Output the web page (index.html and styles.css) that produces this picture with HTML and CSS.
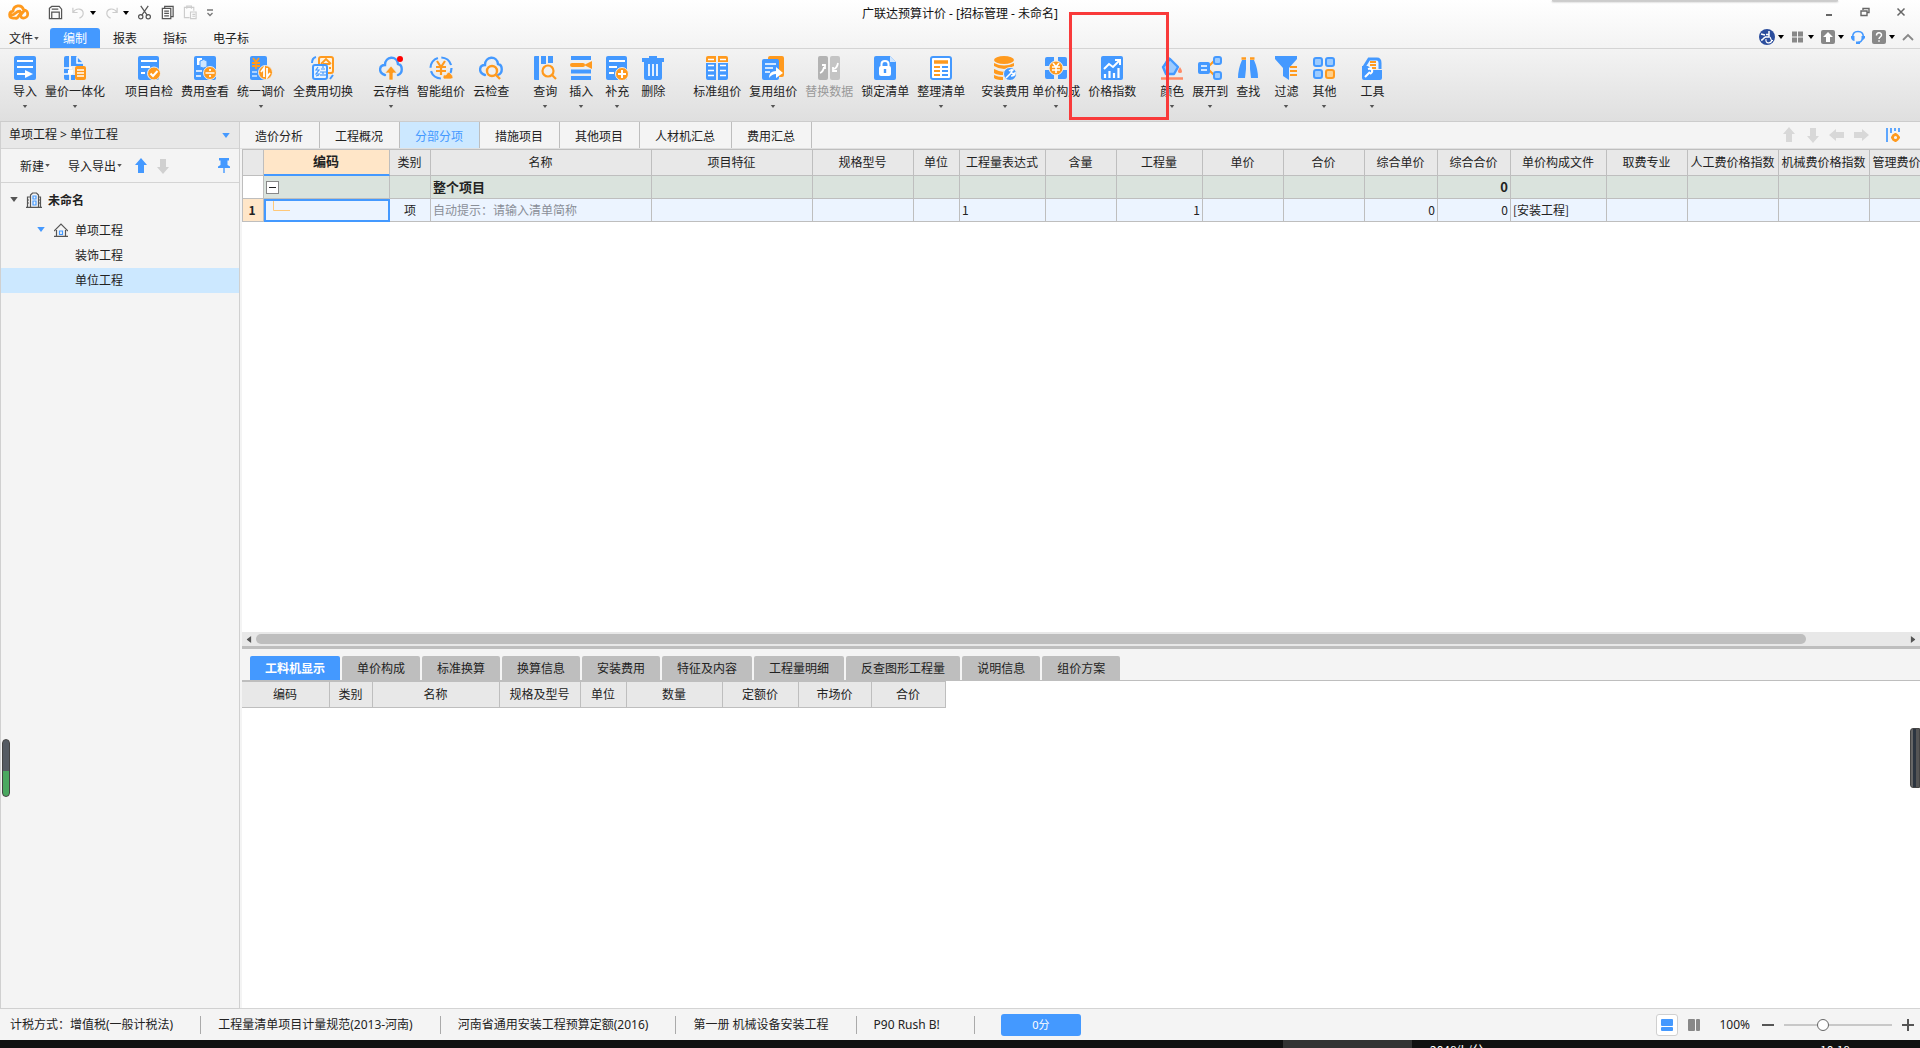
FILE: index.html
```html
<!DOCTYPE html>
<html lang="zh-CN">
<head>
<meta charset="utf-8">
<title>广联达预算计价 - [招标管理 - 未命名]</title>
<link rel="stylesheet" href="styles.css">
</head>
<body>
<svg class="defs" aria-hidden="true">
  <symbol id="caret" viewBox="0 0 6 4"><path d="M0 0h6L3 4z" fill="currentColor"/></symbol>
  <symbol id="up" viewBox="0 0 14 16"><path d="M7 0l6 7H10v8H4V7H1z" fill="currentColor"/></symbol>
  <symbol id="cloud" viewBox="0 0 24 24"><path d="M6 19C-1 17 0 9 6 9c0-9 12-10 13-1 5 1 5 9 0 11" fill="none" stroke="#49f" stroke-width="2.4" stroke-linecap="round"/></symbol>
</svg>

<header class="top">
  <div class="titlebar">
    <div class="quick">
      <svg class="logo" viewBox="0 0 24 18"><path d="M10 15H5.500c-5 0-5-7 0-7.500C6 1 15-.5 17 6c6 0 6 9 0 9-3.500 0-4-3-2-5l2-2M4 11.500c4 .5 4-4 9-4M9 15.500c3-1 3-5 6-6.500" fill="none" stroke="#ff9a1e" stroke-width="3" stroke-linecap="round" stroke-linejoin="round"/></svg>
      <button class="qbtn" aria-label="保存"><svg viewBox="0 0 16 16"><path d="M4 1.500h8l2.500 3v10h-13v-11zM4 14V7.500h8V14M4 4.500h7" fill="none" stroke="#555" stroke-width="1.300"/></svg></button>
      <button class="qbtn off" aria-label="撤销"><svg viewBox="0 0 16 16"><path d="M2 3v5h5M2 8c4-6 11-4 11 1 0 3-2 4-4 5" fill="none" stroke="#ccc" stroke-width="1.300"/></svg><svg class="caret blk"><use href="#caret"/></svg></button>
      <button class="qbtn off" aria-label="恢复"><svg viewBox="0 0 16 16"><path d="M14 3v5H9M14 8C10 2 3 4 3 9c0 3 2 4 4 5" fill="none" stroke="#ccc" stroke-width="1.300"/></svg><svg class="caret blk"><use href="#caret"/></svg></button>
      <button class="qbtn" aria-label="剪切"><svg viewBox="0 0 16 16"><path d="M4 1l7 10M12 1L5 11" fill="none" stroke="#555" stroke-width="1.300"/><circle cx="4" cy="12.500" r="2.300" fill="none" stroke="#555" stroke-width="1.300"/><circle cx="12" cy="12.500" r="2.300" fill="none" stroke="#555" stroke-width="1.300"/></svg></button>
      <button class="qbtn" aria-label="复制"><svg viewBox="0 0 16 16"><path d="M5 3V1.500h9v11h-2M2.500 3.500h9v11h-9zM4.500 6.500h5M4.500 9h5M4.500 11.500h5" fill="none" stroke="#555" stroke-width="1.300"/></svg></button>
      <button class="qbtn off" aria-label="粘贴"><svg viewBox="0 0 16 16"><path d="M7 13.500H1.500v-11h10V6M4 4V1h5v3M8 7.500h6v7H8zM10 10h3M10 12h3" fill="none" stroke="#ccc" stroke-width="1.200"/></svg></button>
      <button class="more" aria-label="自定义"><svg viewBox="0 0 8 8"><path d="M1 1h6M1.500 4L4 6.500 6.500 4" fill="none" stroke="#777" stroke-width="1.300"/></svg></button>
    </div>
    <h1>广联达预算计价 - [招标管理 - 未命名]</h1>
    <div class="winctl">
      <button aria-label="最小化"><svg viewBox="0 0 10 10"><path d="M2 8h6" stroke="#666" stroke-width="2"/></svg></button>
      <button aria-label="还原"><svg viewBox="0 0 10 10"><path d="M3 3V1.500h6v4H7M1 4h6v4.500H1z" fill="none" stroke="#666" stroke-width="1.400"/></svg></button>
      <button aria-label="关闭"><svg viewBox="0 0 10 10"><path d="M1.500 1.500l7 7M8.500 1.500l-7 7" stroke="#666" stroke-width="1.500"/></svg></button>
    </div>
  </div>
  <nav class="menu">
    <button class="file">文件<svg class="caret small"><use href="#caret"/></svg></button>
    <button class="on">编制</button><button>报表</button><button>指标</button><button>电子标</button>
    <div class="tools">
      <button aria-label="账户"><svg class="i16" viewBox="0 0 16 16"><circle cx="8" cy="8" r="8" fill="#2b4d9d"/><path d="M10 2v6H6M2 5l4 1M6 8l-3 3H2M7 5.500h3" fill="none" stroke="#fff" stroke-width="1.500"/><path d="M7 10c-1 5 5 5 6 1M11 8l1.500 3.500H14" fill="none" stroke="#fff" stroke-width="1.100"/></svg><svg class="caret blk"><use href="#caret"/></svg></button>
      <button aria-label="窗口"><svg class="i14" viewBox="0 0 14 14"><path d="M1 1.500h5v5H1zM7 1.500h5v5H7zM1 7.500h5v5H1zM7 7.500h5v5H7z" fill="#888"/></svg><svg class="caret blk"><use href="#caret"/></svg></button>
      <button aria-label="升级"><svg class="i14" viewBox="0 0 14 14"><rect width="14" height="14" rx="2" fill="#888"/><path d="M7 2l5 5H9v5H5V7H2z" fill="#fff"/></svg><svg class="caret blk"><use href="#caret"/></svg></button>
      <button aria-label="客服"><svg class="i14" viewBox="0 0 14 14"><path d="M2 8C1 4 3 1.500 7 1.500S13 4 12 8c-1 3-2 4.500-5 4.500" fill="none" stroke="#49f" stroke-width="1.600"/><path d="M0 6h3.500v5Q1 11 0 8zM14 6h-3.500v4Q13 10 14 8zM5 11.500h4V14H5z" fill="#49f"/></svg></button>
      <button aria-label="帮助"><svg class="i14" viewBox="0 0 14 14"><rect width="14" height="14" rx="2" fill="#888"/><path d="M4.500 5.500C4.500 2 9.500 2 9.500 5c0 2-2.500 2-2.500 4M7 10.300v1.500" fill="none" stroke="#fff" stroke-width="1.500"/></svg><svg class="caret blk"><use href="#caret"/></svg></button>
      <button aria-label="收起功能区"><svg class="i12" viewBox="0 0 12 12"><path d="M1 9l5-5 5 5" fill="none" stroke="#888" stroke-width="1.800"/></svg></button>
    </div>
  </nav>
</header>

<section class="ribbon" aria-label="功能区">
  <div class="grp s20">
    <button><svg class="ic" viewBox="0 0 24 24"><rect x="1" width="22" height="24" rx="2" fill="#49f"/><path d="M4 5h16M4 11h16M4 18h9" stroke="#fff" stroke-width="1.800"/><path d="M12 14l8 4-8 4z" fill="#fff"/></svg>导入<svg class="caret"><use href="#caret"/></svg></button>
    <button><svg class="ic" viewBox="0 0 24 24"><path d="M1 2q0-2 2-2h3v24H3q-2 0-2-2zM8 0h5l7 7v3H8zM8 19h4v5H8z" fill="#49f"/><path d="M1 12h8M1 18h8M14 1v6h6" stroke="#fff" stroke-width="1.500" fill="none"/><rect x="5" y="14" width="5" height="4" fill="#fff"/><rect x="12" y="10" width="11" height="14" rx="2" fill="#ff9a1e"/><path d="M14 14h7M14 17h7M14 20h7" stroke="#fff" stroke-width="1.300"/></svg>量价一体化<svg class="caret"><use href="#caret"/></svg></button>
  </div>
  <div class="grp s20">
    <button><svg class="ic" viewBox="0 0 24 24"><rect x="1" width="21" height="24" rx="2" fill="#49f"/><path d="M4 5h16M4 11h9M4 17h4" stroke="#fff" stroke-width="1.800"/><circle cx="17" cy="17.500" r="6.500" fill="#ff9a1e" stroke="#eee"/><path d="M13.500 17.500l2.500 2.500 4.500-5" fill="none" stroke="#fff" stroke-width="2"/></svg>项目自检</button>
    <button><svg class="ic" viewBox="0 0 24 24"><rect x="1" width="22" height="24" rx="2" fill="#49f"/><rect x="4" y="2" width="5" height="7" fill="#fff"/><path d="M7 5q4-3 7 0v6q-4 2-7 0z" fill="#cfe6ff" stroke="#49f"/><path d="M3 15h6M3 20h5" stroke="#fff" stroke-width="1.700"/><circle cx="17" cy="17" r="6.500" fill="#ff9a1e" stroke="#eee"/><path d="M12.500 17h9M17 13v2M17 19v2" stroke="#fff" stroke-width="1.700"/></svg>费用查看</button>
    <button><svg class="ic" viewBox="0 0 24 24"><rect x="1" width="17" height="24" rx="2" fill="#49f"/><path d="M4 2l3 4 3-4M3 7h8M3 10h8M7 6v7" stroke="#ff9a1e" stroke-width="1.800" fill="none"/><path d="M3 16h5M3 20h5" stroke="#cfe6ff" stroke-width="1.600"/><circle cx="16.500" cy="16.500" r="7" fill="#ff9a1e" stroke="#eee"/><path d="M15 21v-9l-3 4M18 12v9l3-4" fill="none" stroke="#fff" stroke-width="1.800"/></svg>统一调价<svg class="caret"><use href="#caret"/></svg></button>
    <button><svg class="ic" viewBox="0 0 24 24"><rect x="8" y="1" width="14" height="16" rx="2" fill="#fff3df" stroke="#ff9a1e" stroke-width="2"/><path d="M10 8l5-5 5 5M12 8h7M18 12h2" stroke="#ff9a1e" stroke-width="1.800" fill="none"/><rect x="2" y="9" width="14" height="14" rx="2" fill="#eaf4ff" stroke="#49f" stroke-width="2"/><path d="M7 11l-2 3h3l-3 4h4M5 20l3-1M10 13h4M9 16h6M12 16v4M10 18v2M14 18v2M12 10v2" stroke="#49f" stroke-width="1.200" fill="none"/><path d="M1 7q0-5 4-6M22 19l-3 4" stroke="#49f" stroke-width="2" fill="none"/></svg>全费用切换</button>
  </div>
  <div class="grp s24">
    <button><svg class="ic" viewBox="0 0 24 24"><use href="#cloud"/><path d="M12 10l6 7h-4v7h-4v-7H6z" fill="#ff9a1e" stroke="#eee" stroke-width=".7"/><circle cx="21" cy="3" r="3" fill="red"/></svg>云存档<svg class="caret"><use href="#caret"/></svg></button>
    <button><svg class="ic" viewBox="0 0 24 24"><circle cx="12" cy="12" r="10.500" fill="none" stroke="#49f" stroke-width="2.200" stroke-dasharray="13 3.500"/><path d="M8 5l4 6 4-6M7 11h10M7 15h10M12 10v9" stroke="#ff9a1e" stroke-width="2.200" fill="none"/><path d="M14 22q0-4 3-3 2-5 5-1 4 4 0 5h-7z" fill="#ff9a1e" stroke="#eee" stroke-width=".7"/></svg>智能组价</button>
    <button><svg class="ic" viewBox="0 0 24 24"><use href="#cloud"/><circle cx="13" cy="15" r="5" fill="#f0f0f0" stroke="#ff9a1e" stroke-width="2.400"/><path d="M17 19l4 4" stroke="#ff9a1e" stroke-width="2.400"/></svg>云检查</button>
  </div>
  <div class="grp wide s28">
    <button><svg class="ic" viewBox="0 0 24 24"><path d="M1 1q0-1 1-1h4v24H2q-1 0-1-1zM8 0h5v8H8zM15 0h5v7h-5z" fill="#49f"/><circle cx="15" cy="15" r="5.500" fill="#f0f0f0" stroke="#ff9a1e" stroke-width="2.200"/><path d="M19 19l4 4" stroke="#ff9a1e" stroke-width="2.200"/></svg>查询<svg class="caret"><use href="#caret"/></svg></button>
    <button><svg class="ic" viewBox="0 0 24 24"><path d="M2 2h20M2 15.500h20M2 22h20" stroke="#49f" stroke-width="4"/><path d="M3 9h11" stroke="#ff9a1e" stroke-width="4" stroke-linecap="round"/><path d="M15 9l8-4v8z" fill="#ff9a1e"/></svg>插入<svg class="caret"><use href="#caret"/></svg></button>
    <button><svg class="ic" viewBox="0 0 24 24"><rect x="1" width="21" height="24" rx="2" fill="#49f"/><path d="M4 5h16M4 11h8M4 17h5" stroke="#fff" stroke-width="1.800"/><circle cx="17" cy="18" r="6.500" fill="#ff9a1e" stroke="#eee"/><path d="M13 18h8M17 14v8" stroke="#fff" stroke-width="2"/></svg>补充<svg class="caret"><use href="#caret"/></svg></button>
    <button><svg class="ic" viewBox="0 0 24 24"><path d="M1 2h7V0h8v2h7v4h-2v16q0 2-2 2H5q-2 0-2-2V6H1z" fill="#49f"/><path d="M8 8v12M12 8v12M16 8v12" stroke="#fff" stroke-width="1.700"/></svg>删除</button>
  </div>
  <div class="grp s16">
    <button><svg class="ic" viewBox="0 0 24 24"><path d="M1 6V2q0-2 2-2h8v6zM13 6V0h8q2 0 2 2v4z" fill="#ff9a1e"/><path d="M1 7h10v17H3q-2 0-2-2zM13 7h10v15q0 2-2 2h-8z" fill="#49f"/><path d="M3 3.500h6M15 3.500h6M3 9.500h6M15 9.500h6M3 14.500h6M15 14.500h6M3 19.500h6M15 19.500h6" stroke="#fff" stroke-width="1.400"/></svg>标准组价</button>
    <button><svg class="ic" viewBox="0 0 24 24"><rect x="7" width="16" height="21" rx="2" fill="#ff9a1e"/><rect x="1" y="3" width="17" height="21" rx="2" fill="#49f"/><path d="M4 8h11M4 12h8M4 16h5" stroke="#fff" stroke-width="1.600"/><path d="M8 22q0-7 7-7v-4l7 6-7 5v-4q-4 0-7 4z" fill="#fff"/></svg>复用组价<svg class="caret"><use href="#caret"/></svg></button>
    <button class="dim" disabled><svg class="ic" viewBox="0 0 24 24"><rect x="1" width="10" height="24" rx="2" fill="#b3b3b3"/><rect x="13" width="10" height="24" rx="2" fill="#c4c4c4"/><path d="M3 17q3-1 4-6M5 9h3v4M21 7q-1 5-4 6M16 11v4h4" fill="none" stroke="#fff" stroke-width="1.800"/></svg>替换数据</button>
    <button><svg class="ic" viewBox="0 0 24 24"><path d="M1 2q0-2 2-2h14l6 6v16q0 2-2 2H3q-2 0-2-2z" fill="#49f"/><path d="M17 0v6h6z" fill="#cfe6ff"/><rect x="6" y="10" width="12" height="10" rx="2" fill="#fff"/><path d="M8.500 11V8q0-3 3.500-3t3.500 3v3" fill="none" stroke="#fff" stroke-width="2"/><path d="M12 13v4" stroke="#49f" stroke-width="2.400"/></svg>锁定清单</button>
    <button><svg class="ic" viewBox="0 0 24 24"><rect x="2" y="1" width="20" height="22" rx="2" fill="#fff" stroke="#49f" stroke-width="2"/><path d="M5 6h14" stroke="#ff9a1e" stroke-width="3.500"/><path d="M5 11h6M5 15h6M5 19h6" stroke="#ff9a1e" stroke-width="2"/><path d="M13 11h6M13 15h6M13 19h6" stroke="#49f" stroke-width="2"/></svg>整理清单<svg class="caret"><use href="#caret"/></svg></button>
  </div>
  <div class="grp tight s8">
    <button><svg class="ic" viewBox="0 0 24 24"><ellipse cx="11" cy="4" rx="10" ry="4" fill="#ff9a1e"/><path d="M1 7q10 5 20 0v3q-10 6-20 0zM1 13q8 4 12 2l-3 4q-6 0-9-2zM1 19q4 2 9 2v3q-7 0-9-2z" fill="#ff9a1e"/><circle cx="17" cy="18" r="6.500" fill="#49f" stroke="#eee"/><path d="M13 22l5-5M16 15q2-2 4-1l-2 2 2 2 2-1q0 3-4 3" stroke="#fff" stroke-width="1.500" fill="none"/></svg>安装费用<svg class="caret"><use href="#caret"/></svg></button>
    <button><svg class="ic" viewBox="0 0 24 24"><path d="M1 3q0-2 2-2h7v4L5 10H1zM14 1h7q2 0 2 2v7h-4l-5-5zM1 14h4l5 5v4H3q-2 0-2-2zM19 14h4v7q0 2-2 2h-7v-4z" fill="#49f"/><circle cx="12" cy="12" r="7" fill="#ff9a1e" stroke="#eee"/><path d="M9 7l3 4 3-4M8 11h8M8 14h8M12 11v6" stroke="#fff" stroke-width="1.600" fill="none"/></svg>单价构成<svg class="caret"><use href="#caret"/></svg></button>
  </div>
  <div class="grp s24">
    <button><svg class="ic" viewBox="0 0 24 24"><rect x="1" width="22" height="24" rx="2" fill="#49f"/><path d="M4 13l5-5 4 3 7-7M15 4h5v5" fill="none" stroke="#fff" stroke-width="2"/><path d="M5 22v-4M9.500 22v-7M14 22v-5M18.500 22V12" stroke="#fff" stroke-width="2.200"/></svg>价格指数</button>
  </div>
  <div class="grp s8">
    <button><svg class="ic" viewBox="0 0 24 24"><path d="M10 3l8 8-4 7H6l-3-7z" fill="#9ccbff" stroke="#49f" stroke-width="2.400" stroke-linejoin="round"/><path d="M4 10L9 1" stroke="#49f" stroke-width="2" fill="none"/><path d="M20 11q4 6 0 6t0-6z" fill="#ff8a65"/><path d="M1 22.500h22" stroke="#ff8a65" stroke-width="2.500"/></svg>颜色<svg class="caret"><use href="#caret"/></svg></button>
    <button><svg class="ic" viewBox="0 0 24 24"><path d="M9 12l8-8M9 12l8 8" stroke="#ff9a1e" stroke-width="2"/><rect y="6" width="12" height="12" rx="2" fill="#49f"/><path d="M3 10h6M3 14h6" stroke="#fff" stroke-width="1.600"/><rect x="16" y="1" width="7" height="7" rx="2" fill="#9ccbff" stroke="#49f" stroke-width="2"/><rect x="16" y="16" width="7" height="7" rx="2" fill="#9ccbff" stroke="#49f" stroke-width="2"/></svg>展开到<svg class="caret"><use href="#caret"/></svg></button>
  </div>
  <div class="grp loose s24">
    <button><svg class="ic" viewBox="0 0 24 24"><path d="M6 4h4v9l-1 9H2q0-9 4-18zM14 4h4q4 9 4 18h-7l-1-9z" fill="#49f"/><path d="M5.500 2.500H10M14 2.500h4.500" stroke="#ff9a1e" stroke-width="2.600"/></svg>查找</button>
    <button><svg class="ic" viewBox="0 0 24 24"><path d="M1 0h22v3l-8 9v12l-6-4v-8L1 3z" fill="#49f"/><path d="M16 11h7M16 15h7M16 19h7" stroke="#ff9a1e" stroke-width="2"/></svg>过滤<svg class="caret"><use href="#caret"/></svg></button>
    <button><svg class="ic" viewBox="0 0 24 24"><g fill="#9ccbff" stroke="#49f" stroke-width="2"><rect x="2" y="2" width="8" height="8" rx="2"/><rect x="14" y="2" width="8" height="8" rx="2"/><rect x="2" y="14" width="8" height="8" rx="2"/></g><rect x="14" y="14" width="8" height="8" rx="2" fill="#ffcf8a" stroke="#ff9a1e" stroke-width="2"/></svg>其他<svg class="caret"><use href="#caret"/></svg></button>
  </div>
  <div class="grp">
    <button><svg class="ic" viewBox="0 0 24 24"><path d="M4 11L9 3h8q3 0 3 4v6" fill="#eaf4ff" stroke="#49f" stroke-width="3"/><path d="M10 6h6M10 9h6M12 12h4" stroke="#ff9a1e" stroke-width="1.800"/><path d="M2 10h6l4 4h10v8q0 2-2 2H4q-2 0-2-2z" fill="#49f"/><path d="M5 21l5-5M8 13q3-1 4 1t-2 4" stroke="#fff" stroke-width="2" fill="none"/></svg>工具<svg class="caret"><use href="#caret"/></svg></button>
  </div>
</section>

<div class="work">
  <aside>
    <button class="crumb">单项工程 &gt; 单位工程<svg class="drop"><use href="#caret"/></svg></button>
    <div class="sidebar-tools">
      <button>新建<svg class="caret small"><use href="#caret"/></svg></button>
      <button>导入导出<svg class="caret small"><use href="#caret"/></svg></button>
      <button aria-label="上移" class="blue"><svg class="arr"><use href="#up"/></svg></button>
      <button aria-label="下移" class="pale"><svg class="arr down"><use href="#up"/></svg></button>
      <button aria-label="固定" class="pin"><svg viewBox="0 0 12 16"><path d="M1 0h10v2.500H9.500V7L12 8.500V10H0V8.500L2.500 7V2.500H1zM5.300 10h1.400v5H5.300z" fill="#49f"/></svg></button>
    </div>
    <ul class="tree">
      <li class="root"><svg class="caret tw"><use href="#caret"/></svg><svg class="i16" viewBox="0 0 16 16"><path d="M4.500 15V3l2-2h4l2 2v12M4 5H1.500v10M13 5h1.500v10M0 15.300h16M1 8h2M1 11h2M13 8h2M13 11h2" fill="none" stroke="#555" stroke-width="1.200"/><path d="M7 4h3v3H7zM7 9h3v4H7z" fill="none" stroke="#49f" stroke-width="1.200"/></svg>未命名</li>
      <li class="lv1"><svg class="caret tw blue"><use href="#caret"/></svg><svg class="i14" viewBox="0 0 14 14"><path d="M0 8l7-7 7 7M2.500 7v6.300h9V7M0 13.400h14" fill="none" stroke="#555" stroke-width="1.200"/><path d="M5.500 8h3v3.500h-3z" fill="none" stroke="#49f" stroke-width="1.200"/></svg>单项工程</li>
      <li class="lv2">装饰工程</li>
      <li class="lv2 sel">单位工程</li>
    </ul>
  </aside>

  <main>
    <section class="upper">
      <div class="tabs">
        <button>造价分析</button><button>工程概况</button><button class="on">分部分项</button><button>措施项目</button><button>其他项目</button><button>人材机汇总</button><button>费用汇总</button>
        <div class="tab-tools">
          <button aria-label="上移"><svg class="arr"><use href="#up"/></svg></button>
          <button aria-label="下移"><svg class="arr down"><use href="#up"/></svg></button>
          <button aria-label="左移"><svg class="arr left"><use href="#up"/></svg></button>
          <button aria-label="右移"><svg class="arr right"><use href="#up"/></svg></button>
          <button aria-label="列设置" class="set"><svg class="i14" viewBox="0 0 14 14"><path d="M1 0v14M5 0v5M9 0v3M13 0v4" stroke="#49f" stroke-width="1.700"/><circle cx="9.500" cy="9.500" r="2.800" fill="none" stroke="#ff9a1e" stroke-width="2.400"/><path d="M9.500 5v3M9.500 11v3M5 9.500h3M11 9.500h3" stroke="#ff9a1e" stroke-width="2"/></svg></button>
        </div>
      </div>
      <div class="sheet">
        <table class="grid main-grid">
          <colgroup><col class="w22"><col class="w126"><col class="w41"><col class="w221"><col class="w161"><col class="w101"><col class="w46"><col class="w86"><col class="w71"><col class="w86"><col class="w81"><col class="w81"><col class="w73"><col class="w73"><col class="w96"><col class="w81"><col class="w91"><col class="w91"><col class="w91"></colgroup>
          <thead><tr><th></th><th class="cur">编码</th><th>类别</th><th>名称</th><th>项目特征</th><th>规格型号</th><th>单位</th><th>工程量表达式</th><th>含量</th><th>工程量</th><th>单价</th><th>合价</th><th>综合单价</th><th>综合合价</th><th>单价构成文件</th><th>取费专业</th><th>人工费价格指数</th><th>机械费价格指数</th><th>管理费价格指数</th></tr></thead>
          <tbody>
            <tr class="total"><td class="no"></td><td><button class="fold" aria-label="折叠"></button></td><td></td><td>整个项目</td><td></td><td></td><td></td><td></td><td></td><td></td><td></td><td></td><td></td><td class="num">0</td><td></td><td></td><td></td><td></td><td></td></tr>
            <tr class="item"><td class="no cur">1</td><td class="edit"><svg viewBox="0 0 20 18"><path d="M3.500 0v9.500H20" fill="none" stroke="#ffc879"/></svg></td><td class="mid">项</td><td class="hint">自动提示：请输入清单简称</td><td></td><td></td><td></td><td>1</td><td></td><td class="num">1</td><td></td><td></td><td class="num">0</td><td class="num">0</td><td>[安装工程]</td><td></td><td></td><td></td><td></td></tr>
          </tbody>
        </table>
      </div>
      <div class="hscroll"><svg class="tri right"><use href="#caret"/></svg><div class="thumb"></div><svg class="tri left"><use href="#caret"/></svg></div>
    </section>
    <section class="lower">
      <div class="subtabs">
        <button class="on">工料机显示</button><button>单价构成</button><button>标准换算</button><button>换算信息</button><button>安装费用</button><button>特征及内容</button><button>工程量明细</button><button>反查图形工程量</button><button>说明信息</button><button>组价方案</button>
      </div>
      <table class="grid sub-grid">
        <colgroup><col class="w88"><col class="w43"><col class="w127"><col class="w81"><col class="w46"><col class="w96"><col class="w76"><col class="w73"><col class="w74"></colgroup>
        <thead><tr><th>编码</th><th>类别</th><th>名称</th><th>规格及型号</th><th>单位</th><th>数量</th><th>定额价</th><th>市场价</th><th>合价</th></tr></thead>
      </table>
    </section>
  </main>
</div>

<footer class="status">
  <span>计税方式：增值税(一般计税法)</span>
  <span>工程量清单项目计量规范(2013-河南)</span>
  <span>河南省通用安装工程预算定额(2016)</span>
  <span>第一册 机械设备安装工程</span>
  <span class="last">P90 Rush B!</span>
  <button class="score">0分</button>
  <div class="zoom">
    <button class="view on" aria-label="上下布局"><svg class="i14" viewBox="0 0 14 14"><rect x="1" y="1" width="12" height="7" rx="1" fill="#49f"/><rect x="1" y="9" width="12" height="4" rx="1" fill="#49f"/></svg></button>
    <button class="view" aria-label="左右布局"><svg class="i14" viewBox="0 0 14 14"><rect x="1" y="1" width="7" height="12" rx="1" fill="#888"/><rect x="9" y="1" width="4" height="12" rx="1" fill="#888"/></svg></button>
    <label for="zoom">100%</label>
    <button class="step" aria-label="缩小"><svg class="i12" viewBox="0 0 12 12"><path d="M0 6h12" stroke="#555" stroke-width="2"/></svg></button>
    <input id="zoom" type="range" min="0" max="100" value="34">
    <button class="step" aria-label="放大"><svg class="i12" viewBox="0 0 12 12"><path d="M0 6h12M6 0v12" stroke="#555" stroke-width="2"/></svg></button>
  </div>
</footer>
<div class="taskbar"><div class="task"></div><span>2048(k/分</span><time>10:18</time></div>

<div class="callout"></div>
<div class="peek"></div>
<div class="dock dock-left"></div>
<div class="dock dock-right"></div>
</body>
</html>
```
FILE: styles.css
```css
* { box-sizing: border-box; }
body {
  margin: 0;
  min-height: 100vh;
  display: flex;
  flex-direction: column;
  position: relative;
  overflow: hidden;
  background: #f4f4f4;
  color: #222;
  font: 12px/18px "Noto Sans CJK SC", sans-serif;
}
button {
  border: 0;
  padding: 0;
  background: none;
  color: inherit;
  font: inherit;
  white-space: nowrap;
}
svg { display: block; flex: none; }
.defs { position: absolute; width: 0; height: 0; }
.caret { width: 6px; height: 4px; color: #555; }
.small { width: 5px; height: 3px; }
.blk { color: #000; }
.blue { color: #49f; }
.i12 { width: 12px; height: 12px; }
.i14 { width: 14px; height: 14px; }
.i16 { width: 16px; height: 16px; }
.arr { width: 14px; height: 16px; }
.down { transform: rotate(180deg); }
.left { transform: rotate(-90deg); }
.right { transform: rotate(90deg); }

/* title bar and menu */
.top { background: linear-gradient(#fff, #f3f3f3); border-bottom: 1px solid #d4d4d4; }
.titlebar { display: grid; grid-template-columns: 1fr auto 1fr; height: 28px; }
.titlebar h1 { margin: 0; padding-top: 5px; font: 400 12px/18px "Noto Sans", "Noto Sans CJK SC", sans-serif; color: #111; }
.quick { display: flex; align-items: center; gap: 8px; padding-left: 8px; height: 25px; }
.logo { width: 22px; height: 17px; margin-right: 10px; }
.qbtn { display: flex; align-items: center; gap: 4px; }
.qbtn svg:first-child { width: 15px; height: 15px; }
.more svg { width: 8px; height: 8px; }
.winctl { display: flex; justify-content: flex-end; align-items: center; gap: 26px; padding-right: 14px; height: 24px; }
.winctl svg { width: 10px; height: 10px; }
.menu { display: flex; height: 20px; }
.menu > button { padding: 0 13px; border-radius: 3px 3px 0 0; }
.menu .file { display: flex; align-items: center; gap: 1px; width: 50px; padding: 0 0 0 9px; }
.menu .on { background: #49f; color: #fff; }
.tools { display: flex; align-items: center; gap: 7px; margin-left: auto; padding: 0 6px 2px 0; }
.tools button { display: flex; align-items: center; gap: 3px; }

/* ribbon */
.ribbon {
  display: flex;
  height: 73px;
  padding: 7px 0 0 13px;
  background: linear-gradient(#f3f3f3, #dfdfdf);
  border-bottom: 1px solid #ccc;
}
.grp { display: flex; flex: none; align-items: flex-start; gap: 8px; }
.grp.wide { gap: 12px; }
.grp.loose { gap: 14px; }
.grp.tight { gap: 3px; }
.grp button { display: flex; flex-direction: column; align-items: center; line-height: 22px; }
.grp .ic { width: 24px; height: 24px; }
.grp .caret { margin-top: 3px; width: 6px; height: 3px; }
.grp .dim { color: #999; }
.s8 { margin-right: 8px; }
.s16 { margin-right: 16px; }
.s20 { margin-right: 20px; }
.s24 { margin-right: 24px; }
.s28 { margin-right: 28px; }

/* workspace */
.work { flex: 1; display: flex; min-height: 0; }
aside { flex: 0 0 240px; border: 1px solid #d0d0d0; border-top: 0; }
.crumb {
  display: flex;
  align-items: center;
  justify-content: space-between;
  width: 100%;
  height: 27px;
  padding: 0 9px 0 8px;
  background: #e8e8e8;
  border-bottom: 1px solid #d4d4d4;
  font-family: "Noto Sans", "Noto Sans CJK SC", sans-serif;
}
.drop { width: 8px; height: 5px; color: #49f; }
.sidebar-tools {
  display: flex;
  align-items: center;
  height: 34px;
  padding: 0 9px 0 19px;
  border-bottom: 1px solid #d4d4d4;
}
.sidebar-tools button { display: flex; align-items: center; gap: 1px; margin-right: 8px; }
.sidebar-tools button:first-child { margin-right: 18px; }
.sidebar-tools button:nth-child(2) { margin-right: 12px; }
.pale { color: #d0d0d0; }
.sidebar-tools .pin { margin: 0 0 0 auto; }
.pin svg { width: 12px; height: 16px; }
.tree { list-style: none; margin: 0; padding: 0; }
.tree li { display: flex; align-items: center; height: 25px; padding-bottom: 2px; }
.tree .root { height: 35px; padding-left: 9px; font-weight: 700; }
.tree .tw { width: 8px; height: 5px; margin-right: 8px; }
.tree .i16 { margin-right: 6px; }
.tree .i14 { margin-right: 7px; }
.tree .lv1 { padding-left: 36px; }
.tree .lv1 .tw { margin-right: 9px; }
.tree .lv2 { padding-left: 74px; }
.tree .sel { background: #cce8ff; }
.tree .blue { color: #49f; }

main { flex: 1; min-width: 0; display: flex; flex-direction: column; border-bottom: 1px solid #d4d4d4; }
.upper { flex: 1; display: flex; flex-direction: column; min-height: 0; border-bottom: 3px solid #bebebe; margin-left: 2px; }
.tabs { display: flex; height: 27px; margin-left: -2px; border-bottom: 1px solid #e0e0e0; }
.tabs > button { padding: 2px 16px 0 15px; border-right: 1px solid #bebebe; }
.tabs .on { background: #cce8ff; color: #49f; }
.tab-tools { display: flex; align-items: center; gap: 10px; margin-left: auto; padding-right: 20px; color: #d8d8d8; }
.tab-tools .set { margin-left: 8px; }
.sheet { flex: 1; overflow: hidden; background: #fff; }

.grid { border-collapse: separate; border-spacing: 0; table-layout: fixed; }
.grid th, .grid td {
  height: 23px;
  padding: 0 2px;
  border: 0 solid #bebebe;
  border-width: 0 1px 1px 0;
  line-height: 18px;
  white-space: nowrap;
  overflow: hidden;
}
.grid th { background: #e8e8e8; font-weight: 400; text-align: center; padding: 0 1px 2px 0; }
.main-grid { width: 1719px; border-top: 1px solid #bebebe; }
.main-grid th { height: 26px; }
.main-grid th:first-child, .main-grid .no { border-left-width: 1px; }
.main-grid th.cur { background: #ffe6c8; border-bottom: 2px solid #49f; font-weight: 700; font-size: 13px; }
.total td { background: #dae3dd; font-weight: 700; font-size: 13px; }
.main-grid .total .no { background: #fff; }
.item td { background: #ecf4ff; }
.main-grid .no.cur { padding: 0 2px 0 0; background: #ffe6c8; font-weight: 700; text-align: center; }
.main-grid .edit { border: 2px solid #49f; padding: 0 0 0 4px; vertical-align: top; }
.edit svg { width: 20px; height: 18px; }
.num { text-align: right; }
.mid { text-align: center; }
.item .hint { color: #8a8f98; }
.fold { display: flex; align-items: center; justify-content: center; width: 13px; height: 13px; background: #fff; border: 1px solid #888; }
.fold::before { content: ""; width: 7px; height: 1px; background: #222; }

.w22 { width: 22px; } .w41 { width: 41px; } .w43 { width: 43px; }
.w46 { width: 46px; } .w71 { width: 71px; } .w73 { width: 73px; } .w74 { width: 74px; }
.w76 { width: 76px; } .w81 { width: 81px; } .w86 { width: 86px; } .w88 { width: 88px; }
.w91 { width: 91px; } .w96 { width: 96px; } .w101 { width: 101px; } .w126 { width: 126px; }
.w127 { width: 127px; } .w161 { width: 161px; } .w221 { width: 221px; }

.hscroll { display: flex; align-items: center; gap: 3px; height: 14px; padding: 0 3px; background: #e8e8e8; }
.hscroll .thumb { flex: 1; height: 10px; margin-right: 6%; border-radius: 5px; background: #bebebe; }
.tri { width: 8px; height: 5px; color: #555; }

.lower { flex: 0 0 359px; margin-left: 2px; background: #fff; }
.subtabs { display: flex; gap: 2px; height: 32px; padding: 7px 0 0 8px; background: #f4f4f4; border-bottom: 1px solid #bebebe; }
.subtabs button { padding: 0 15px; background: #bebebe; border-radius: 2px 2px 0 0; }
.subtabs .on { background: #49f; color: #fff; font-weight: 700; }
.sub-grid { width: 704px; border-top: 1px solid #bebebe; }
.sub-grid th { height: 26px; }

/* status bar */
.status { display: flex; align-items: center; height: 31px; padding-left: 10px; white-space: nowrap; font-family: "Noto Sans", "Noto Sans CJK SC", sans-serif; }
.status > span { display: flex; align-items: center; padding-top: 1px; }
.status > span::after { content: ""; width: 1px; height: 18px; margin: 0 17px 0 27px; background: #aaa; }
.status > .last::after { margin: 0 26px 0 34px; }
.score { width: 80px; height: 22px; border-radius: 3px; background: #49f; color: #fff; font-size: 11px; }
.zoom { display: flex; align-items: center; margin-left: auto; padding-right: 6px; }
.view { display: flex; align-items: center; justify-content: center; width: 22px; height: 22px; margin-right: 5px; }
.view.on { background: #fff; border: 1px solid #d0d0d0; border-radius: 3px; }
.zoom label { margin: 0 12px 0 9px; }
.zoom input { appearance: none; width: 108px; height: 14px; margin: 0 10px; background: none; }
.zoom input::-webkit-slider-runnable-track { height: 2px; background: #c8c8c8; }
.zoom input::-webkit-slider-thumb { appearance: none; width: 12px; height: 12px; margin-top: -5px; border: 1px solid #666; border-radius: 50%; background: #fff; }

.taskbar { display: flex; height: 8px; padding: 0 70px 0 1283px; overflow: hidden; background: #101010; color: #fff; line-height: 20px; }
.task { width: 129px; background: #333; }
.taskbar span { margin-left: 18px; }
.taskbar time { margin-left: auto; }

/* layers that float over the window */
.callout { position: absolute; left: 1069px; top: 12px; width: 100px; height: 108px; border: 3px solid #f93a3a; }
.peek { position: absolute; right: 82px; top: 0; width: 286px; height: 1px; background: #ccc; box-shadow: 0 1px 2px #999; }
.dock { position: absolute; border: 1px solid #444; background: #555b63; }
.dock-left { left: 2px; top: 739px; width: 8px; height: 58px; border-radius: 4px; background: linear-gradient(#555b63 55%, #4aa860 55%); }
.dock-right { right: 0; top: 728px; width: 10px; height: 60px; border-radius: 3px 0 0 3px; background: linear-gradient(90deg, #666 30%, #2c3540 30% 60%, #555 60%); }
```
